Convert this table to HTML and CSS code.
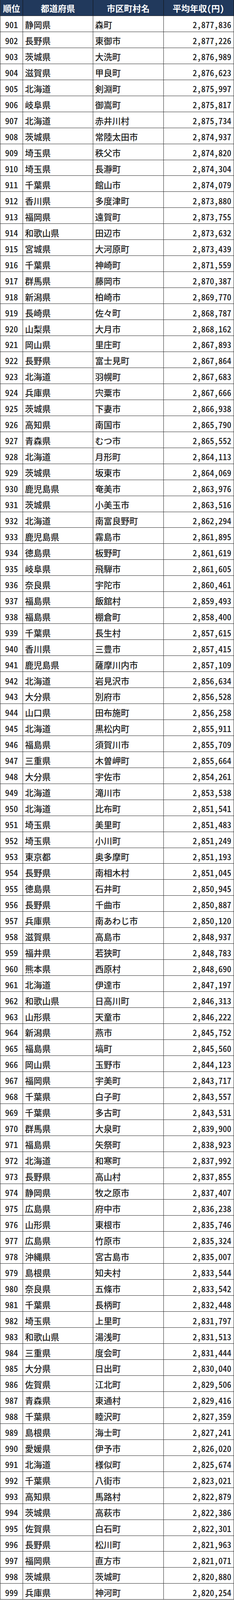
FILE: index.html
```html
<!DOCTYPE html>
<html lang="ja">
<head>
<meta charset="utf-8">
<title>平均年収ランキング 901〜999位</title>
<link rel="stylesheet" href="styles.css">
</head>
<body>
<div class="table">
<div class="row head"><div class="c rank">順位</div><div class="c pref">都道府県</div><div class="c city">市区町村名</div><div class="c pay">平均年収（円）</div></div>
<div class="row"><div class="c rank">901</div><div class="c pref">静岡県</div><div class="c city">森町</div><div class="c pay">2,877,836</div></div>
<div class="row"><div class="c rank">902</div><div class="c pref">長野県</div><div class="c city">東御市</div><div class="c pay">2,877,226</div></div>
<div class="row"><div class="c rank">903</div><div class="c pref">茨城県</div><div class="c city">大洗町</div><div class="c pay">2,876,989</div></div>
<div class="row"><div class="c rank">904</div><div class="c pref">滋賀県</div><div class="c city">甲良町</div><div class="c pay">2,876,623</div></div>
<div class="row"><div class="c rank">905</div><div class="c pref">北海道</div><div class="c city">剣淵町</div><div class="c pay">2,875,997</div></div>
<div class="row"><div class="c rank">906</div><div class="c pref">岐阜県</div><div class="c city">御嵩町</div><div class="c pay">2,875,817</div></div>
<div class="row"><div class="c rank">907</div><div class="c pref">北海道</div><div class="c city">赤井川村</div><div class="c pay">2,875,734</div></div>
<div class="row"><div class="c rank">908</div><div class="c pref">茨城県</div><div class="c city">常陸太田市</div><div class="c pay">2,874,937</div></div>
<div class="row"><div class="c rank">909</div><div class="c pref">埼玉県</div><div class="c city">秩父市</div><div class="c pay">2,874,820</div></div>
<div class="row"><div class="c rank">910</div><div class="c pref">埼玉県</div><div class="c city">長瀞町</div><div class="c pay">2,874,304</div></div>
<div class="row"><div class="c rank">911</div><div class="c pref">千葉県</div><div class="c city">館山市</div><div class="c pay">2,874,079</div></div>
<div class="row"><div class="c rank">912</div><div class="c pref">香川県</div><div class="c city">多度津町</div><div class="c pay">2,873,880</div></div>
<div class="row"><div class="c rank">913</div><div class="c pref">福岡県</div><div class="c city">遠賀町</div><div class="c pay">2,873,755</div></div>
<div class="row"><div class="c rank">914</div><div class="c pref">和歌山県</div><div class="c city">田辺市</div><div class="c pay">2,873,632</div></div>
<div class="row"><div class="c rank">915</div><div class="c pref">宮城県</div><div class="c city">大河原町</div><div class="c pay">2,873,439</div></div>
<div class="row"><div class="c rank">916</div><div class="c pref">千葉県</div><div class="c city">神崎町</div><div class="c pay">2,871,559</div></div>
<div class="row"><div class="c rank">917</div><div class="c pref">群馬県</div><div class="c city">藤岡市</div><div class="c pay">2,870,387</div></div>
<div class="row"><div class="c rank">918</div><div class="c pref">新潟県</div><div class="c city">柏崎市</div><div class="c pay">2,869,770</div></div>
<div class="row"><div class="c rank">919</div><div class="c pref">長崎県</div><div class="c city">佐々町</div><div class="c pay">2,868,787</div></div>
<div class="row"><div class="c rank">920</div><div class="c pref">山梨県</div><div class="c city">大月市</div><div class="c pay">2,868,162</div></div>
<div class="row"><div class="c rank">921</div><div class="c pref">岡山県</div><div class="c city">里庄町</div><div class="c pay">2,867,893</div></div>
<div class="row"><div class="c rank">922</div><div class="c pref">長野県</div><div class="c city">富士見町</div><div class="c pay">2,867,864</div></div>
<div class="row"><div class="c rank">923</div><div class="c pref">北海道</div><div class="c city">羽幌町</div><div class="c pay">2,867,683</div></div>
<div class="row"><div class="c rank">924</div><div class="c pref">兵庫県</div><div class="c city">宍粟市</div><div class="c pay">2,867,666</div></div>
<div class="row"><div class="c rank">925</div><div class="c pref">茨城県</div><div class="c city">下妻市</div><div class="c pay">2,866,938</div></div>
<div class="row"><div class="c rank">926</div><div class="c pref">高知県</div><div class="c city">南国市</div><div class="c pay">2,865,790</div></div>
<div class="row"><div class="c rank">927</div><div class="c pref">青森県</div><div class="c city">むつ市</div><div class="c pay">2,865,552</div></div>
<div class="row"><div class="c rank">928</div><div class="c pref">北海道</div><div class="c city">月形町</div><div class="c pay">2,864,113</div></div>
<div class="row"><div class="c rank">929</div><div class="c pref">茨城県</div><div class="c city">坂東市</div><div class="c pay">2,864,069</div></div>
<div class="row"><div class="c rank">930</div><div class="c pref">鹿児島県</div><div class="c city">奄美市</div><div class="c pay">2,863,976</div></div>
<div class="row"><div class="c rank">931</div><div class="c pref">茨城県</div><div class="c city">小美玉市</div><div class="c pay">2,863,516</div></div>
<div class="row"><div class="c rank">932</div><div class="c pref">北海道</div><div class="c city">南富良野町</div><div class="c pay">2,862,294</div></div>
<div class="row"><div class="c rank">933</div><div class="c pref">鹿児島県</div><div class="c city">霧島市</div><div class="c pay">2,861,895</div></div>
<div class="row"><div class="c rank">934</div><div class="c pref">徳島県</div><div class="c city">板野町</div><div class="c pay">2,861,619</div></div>
<div class="row"><div class="c rank">935</div><div class="c pref">岐阜県</div><div class="c city">飛騨市</div><div class="c pay">2,861,605</div></div>
<div class="row"><div class="c rank">936</div><div class="c pref">奈良県</div><div class="c city">宇陀市</div><div class="c pay">2,860,461</div></div>
<div class="row"><div class="c rank">937</div><div class="c pref">福島県</div><div class="c city">飯舘村</div><div class="c pay">2,859,493</div></div>
<div class="row"><div class="c rank">938</div><div class="c pref">福島県</div><div class="c city">棚倉町</div><div class="c pay">2,858,400</div></div>
<div class="row"><div class="c rank">939</div><div class="c pref">千葉県</div><div class="c city">長生村</div><div class="c pay">2,857,615</div></div>
<div class="row"><div class="c rank">940</div><div class="c pref">香川県</div><div class="c city">三豊市</div><div class="c pay">2,857,415</div></div>
<div class="row"><div class="c rank">941</div><div class="c pref">鹿児島県</div><div class="c city">薩摩川内市</div><div class="c pay">2,857,109</div></div>
<div class="row"><div class="c rank">942</div><div class="c pref">北海道</div><div class="c city">岩見沢市</div><div class="c pay">2,856,634</div></div>
<div class="row"><div class="c rank">943</div><div class="c pref">大分県</div><div class="c city">別府市</div><div class="c pay">2,856,528</div></div>
<div class="row"><div class="c rank">944</div><div class="c pref">山口県</div><div class="c city">田布施町</div><div class="c pay">2,856,258</div></div>
<div class="row"><div class="c rank">945</div><div class="c pref">北海道</div><div class="c city">黒松内町</div><div class="c pay">2,855,911</div></div>
<div class="row"><div class="c rank">946</div><div class="c pref">福島県</div><div class="c city">須賀川市</div><div class="c pay">2,855,709</div></div>
<div class="row"><div class="c rank">947</div><div class="c pref">三重県</div><div class="c city">木曽岬町</div><div class="c pay">2,855,664</div></div>
<div class="row"><div class="c rank">948</div><div class="c pref">大分県</div><div class="c city">宇佐市</div><div class="c pay">2,854,261</div></div>
<div class="row"><div class="c rank">949</div><div class="c pref">北海道</div><div class="c city">滝川市</div><div class="c pay">2,853,538</div></div>
<div class="row"><div class="c rank">950</div><div class="c pref">北海道</div><div class="c city">比布町</div><div class="c pay">2,851,541</div></div>
<div class="row"><div class="c rank">951</div><div class="c pref">埼玉県</div><div class="c city">美里町</div><div class="c pay">2,851,483</div></div>
<div class="row"><div class="c rank">952</div><div class="c pref">埼玉県</div><div class="c city">小川町</div><div class="c pay">2,851,249</div></div>
<div class="row"><div class="c rank">953</div><div class="c pref">東京都</div><div class="c city">奥多摩町</div><div class="c pay">2,851,193</div></div>
<div class="row"><div class="c rank">954</div><div class="c pref">長野県</div><div class="c city">南相木村</div><div class="c pay">2,851,045</div></div>
<div class="row"><div class="c rank">955</div><div class="c pref">徳島県</div><div class="c city">石井町</div><div class="c pay">2,850,945</div></div>
<div class="row"><div class="c rank">956</div><div class="c pref">長野県</div><div class="c city">千曲市</div><div class="c pay">2,850,887</div></div>
<div class="row"><div class="c rank">957</div><div class="c pref">兵庫県</div><div class="c city">南あわじ市</div><div class="c pay">2,850,120</div></div>
<div class="row"><div class="c rank">958</div><div class="c pref">滋賀県</div><div class="c city">高島市</div><div class="c pay">2,848,937</div></div>
<div class="row"><div class="c rank">959</div><div class="c pref">福井県</div><div class="c city">若狭町</div><div class="c pay">2,848,783</div></div>
<div class="row"><div class="c rank">960</div><div class="c pref">熊本県</div><div class="c city">西原村</div><div class="c pay">2,848,690</div></div>
<div class="row"><div class="c rank">961</div><div class="c pref">北海道</div><div class="c city">伊達市</div><div class="c pay">2,847,197</div></div>
<div class="row"><div class="c rank">962</div><div class="c pref">和歌山県</div><div class="c city">日高川町</div><div class="c pay">2,846,313</div></div>
<div class="row"><div class="c rank">963</div><div class="c pref">山形県</div><div class="c city">天童市</div><div class="c pay">2,846,222</div></div>
<div class="row"><div class="c rank">964</div><div class="c pref">新潟県</div><div class="c city">燕市</div><div class="c pay">2,845,752</div></div>
<div class="row"><div class="c rank">965</div><div class="c pref">福島県</div><div class="c city">塙町</div><div class="c pay">2,845,560</div></div>
<div class="row"><div class="c rank">966</div><div class="c pref">岡山県</div><div class="c city">玉野市</div><div class="c pay">2,844,123</div></div>
<div class="row"><div class="c rank">967</div><div class="c pref">福岡県</div><div class="c city">宇美町</div><div class="c pay">2,843,717</div></div>
<div class="row"><div class="c rank">968</div><div class="c pref">千葉県</div><div class="c city">白子町</div><div class="c pay">2,843,557</div></div>
<div class="row"><div class="c rank">969</div><div class="c pref">千葉県</div><div class="c city">多古町</div><div class="c pay">2,843,531</div></div>
<div class="row"><div class="c rank">970</div><div class="c pref">群馬県</div><div class="c city">大泉町</div><div class="c pay">2,839,900</div></div>
<div class="row"><div class="c rank">971</div><div class="c pref">福島県</div><div class="c city">矢祭町</div><div class="c pay">2,838,923</div></div>
<div class="row"><div class="c rank">972</div><div class="c pref">北海道</div><div class="c city">和寒町</div><div class="c pay">2,837,992</div></div>
<div class="row"><div class="c rank">973</div><div class="c pref">長野県</div><div class="c city">高山村</div><div class="c pay">2,837,855</div></div>
<div class="row"><div class="c rank">974</div><div class="c pref">静岡県</div><div class="c city">牧之原市</div><div class="c pay">2,837,407</div></div>
<div class="row"><div class="c rank">975</div><div class="c pref">広島県</div><div class="c city">府中市</div><div class="c pay">2,836,238</div></div>
<div class="row"><div class="c rank">976</div><div class="c pref">山形県</div><div class="c city">東根市</div><div class="c pay">2,835,746</div></div>
<div class="row"><div class="c rank">977</div><div class="c pref">広島県</div><div class="c city">竹原市</div><div class="c pay">2,835,324</div></div>
<div class="row"><div class="c rank">978</div><div class="c pref">沖縄県</div><div class="c city">宮古島市</div><div class="c pay">2,835,007</div></div>
<div class="row"><div class="c rank">979</div><div class="c pref">島根県</div><div class="c city">知夫村</div><div class="c pay">2,833,544</div></div>
<div class="row"><div class="c rank">980</div><div class="c pref">奈良県</div><div class="c city">五條市</div><div class="c pay">2,833,542</div></div>
<div class="row"><div class="c rank">981</div><div class="c pref">千葉県</div><div class="c city">長柄町</div><div class="c pay">2,832,448</div></div>
<div class="row"><div class="c rank">982</div><div class="c pref">埼玉県</div><div class="c city">上里町</div><div class="c pay">2,831,797</div></div>
<div class="row"><div class="c rank">983</div><div class="c pref">和歌山県</div><div class="c city">湯浅町</div><div class="c pay">2,831,513</div></div>
<div class="row"><div class="c rank">984</div><div class="c pref">三重県</div><div class="c city">度会町</div><div class="c pay">2,831,444</div></div>
<div class="row"><div class="c rank">985</div><div class="c pref">大分県</div><div class="c city">日出町</div><div class="c pay">2,830,040</div></div>
<div class="row"><div class="c rank">986</div><div class="c pref">佐賀県</div><div class="c city">江北町</div><div class="c pay">2,829,506</div></div>
<div class="row"><div class="c rank">987</div><div class="c pref">青森県</div><div class="c city">東通村</div><div class="c pay">2,829,416</div></div>
<div class="row"><div class="c rank">988</div><div class="c pref">千葉県</div><div class="c city">睦沢町</div><div class="c pay">2,827,359</div></div>
<div class="row"><div class="c rank">989</div><div class="c pref">島根県</div><div class="c city">海士町</div><div class="c pay">2,827,241</div></div>
<div class="row"><div class="c rank">990</div><div class="c pref">愛媛県</div><div class="c city">伊予市</div><div class="c pay">2,826,020</div></div>
<div class="row"><div class="c rank">991</div><div class="c pref">北海道</div><div class="c city">様似町</div><div class="c pay">2,825,674</div></div>
<div class="row"><div class="c rank">992</div><div class="c pref">千葉県</div><div class="c city">八街市</div><div class="c pay">2,823,021</div></div>
<div class="row"><div class="c rank">993</div><div class="c pref">高知県</div><div class="c city">馬路村</div><div class="c pay">2,822,879</div></div>
<div class="row"><div class="c rank">994</div><div class="c pref">茨城県</div><div class="c city">高萩市</div><div class="c pay">2,822,386</div></div>
<div class="row"><div class="c rank">995</div><div class="c pref">佐賀県</div><div class="c city">白石町</div><div class="c pay">2,822,301</div></div>
<div class="row"><div class="c rank">996</div><div class="c pref">長野県</div><div class="c city">松川町</div><div class="c pay">2,821,963</div></div>
<div class="row"><div class="c rank">997</div><div class="c pref">福岡県</div><div class="c city">直方市</div><div class="c pay">2,821,071</div></div>
<div class="row"><div class="c rank">998</div><div class="c pref">茨城県</div><div class="c city">茨城町</div><div class="c pay">2,820,880</div></div>
<div class="row"><div class="c rank">999</div><div class="c pref">兵庫県</div><div class="c city">神河町</div><div class="c pay">2,820,254</div></div>
</div>
</body>
</html>
```
FILE: styles.css
```css
html, body {
  margin: 0;
  padding: 0;
  background: #ffffff;
}

body {
  font-family: "Noto Sans CJK JP", "Noto Sans", sans-serif;
  font-feature-settings: "hwid" 1;
  color: #1e1e1e;
}

.table {
  width: 100%;
  box-sizing: border-box;
  border-left: 1px solid #2a2a2a;
}

.row {
  display: grid;
  grid-template-columns: 9.7% 30% 30.2% 1fr;
  height: calc(100vh / 100);
  box-sizing: border-box;
  border-bottom: 1px solid #2a2a2a;
  overflow: hidden;
}

.c {
  display: flex;
  align-items: center;
  min-width: 0;
  min-height: 0;
  padding: 3px 5px 0 5px;
  box-sizing: border-box;
  border-right: 1px solid #2a2a2a;
  font-size: 22px;
  font-weight: 500;
  line-height: 1;
  white-space: nowrap;
  overflow: hidden;
}

.rank {
  justify-content: center;
  padding-left: 2px;
  padding-right: 2px;
}

.pref,
.city {
  justify-content: flex-start;
}

.pay {
  justify-content: flex-end;
  padding-right: 6px;
}

.head {
  background: #21395c;
}

.head .c {
  color: #ffffff;
  font-weight: 700;
  justify-content: center;
  padding-top: 0;
  border-right-color: #111111;
}

.head .rank {
  padding: 0;
}
```
